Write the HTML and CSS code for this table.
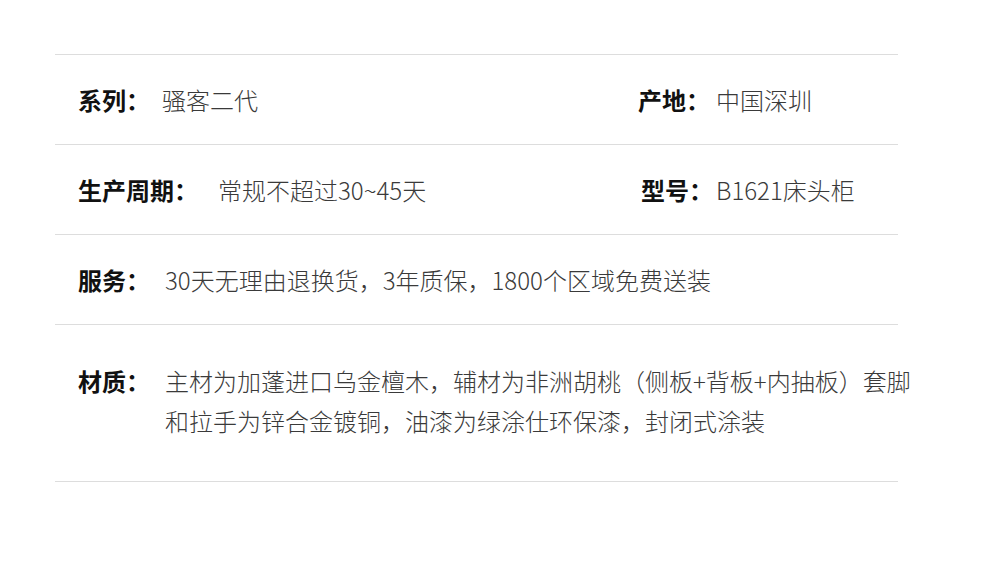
FILE: index.html
```html
<!DOCTYPE html>
<html lang="zh-CN">
<head>
<meta charset="utf-8">
<title>产品参数</title>
<link rel="stylesheet" href="styles.css">
</head>
<body>
<div class="spec">
  <div class="row two">
    <div class="cell"><span class="label">系列：</span><span class="value v12">骚客二代</span></div>
    <div class="cell"><span class="label">产地：</span><span class="value v6">中国深圳</span></div>
  </div>
  <div class="row two">
    <div class="cell"><span class="label">生产周期：</span><span class="value v20">常规不超过30~45天</span></div>
    <div class="cell shift"><span class="label">型号：</span><span class="value v3">B1621床头柜</span></div>
  </div>
  <div class="row">
    <div class="cell"><span class="label">服务：</span><span class="value v15">30天无理由退换货，3年质保，1800个区域免费送装</span></div>
  </div>
  <div class="row tall">
    <div class="cell top"><span class="label">材质：</span><span class="value v15 wide">主材为加蓬进口乌金檀木，辅材为非洲胡桃（侧板+背板+内抽板）套脚和拉手为锌合金镀铜，油漆为绿涂仕环保漆，封闭式涂装</span></div>
  </div>
</div>
</body>
</html>
```
FILE: styles.css
```css
html, body {
  margin: 0;
  padding: 0;
  background: #ffffff;
}
body {
  font-family: "Noto Sans CJK SC", "Noto Sans", sans-serif;
  font-size: 24px;
  line-height: 40px;
  color: #333333;
}
.spec {
  margin: 54px 0 0 55px;
  width: 843px;
  border-top: 1px solid #dddddd;
}
.row {
  display: grid;
  grid-template-columns: 560px 1fr;
  padding: 25px 0 24px 23px;
  border-bottom: 1px solid #dddddd;
}
.row.tall {
  padding: 36px 0 40px 23px;
}
.cell {
  display: flex;
  align-items: baseline;
  white-space: nowrap;
}
.cell.top {
  align-items: flex-start;
}
.cell.shift {
  padding-left: 3px;
}
.label {
  font-weight: 700;
  color: #111111;
  flex: none;
}
.value {
  font-weight: 300;
  color: #3a3a3a;
}
.v3 { margin-left: 3px; }
.v6 { margin-left: 6px; }
.v12 { margin-left: 12px; }
.v15 { margin-left: 15px; }
.v20 { margin-left: 20px; }
.wide {
  white-space: normal;
  width: 750px;
  flex: none;
}
```
